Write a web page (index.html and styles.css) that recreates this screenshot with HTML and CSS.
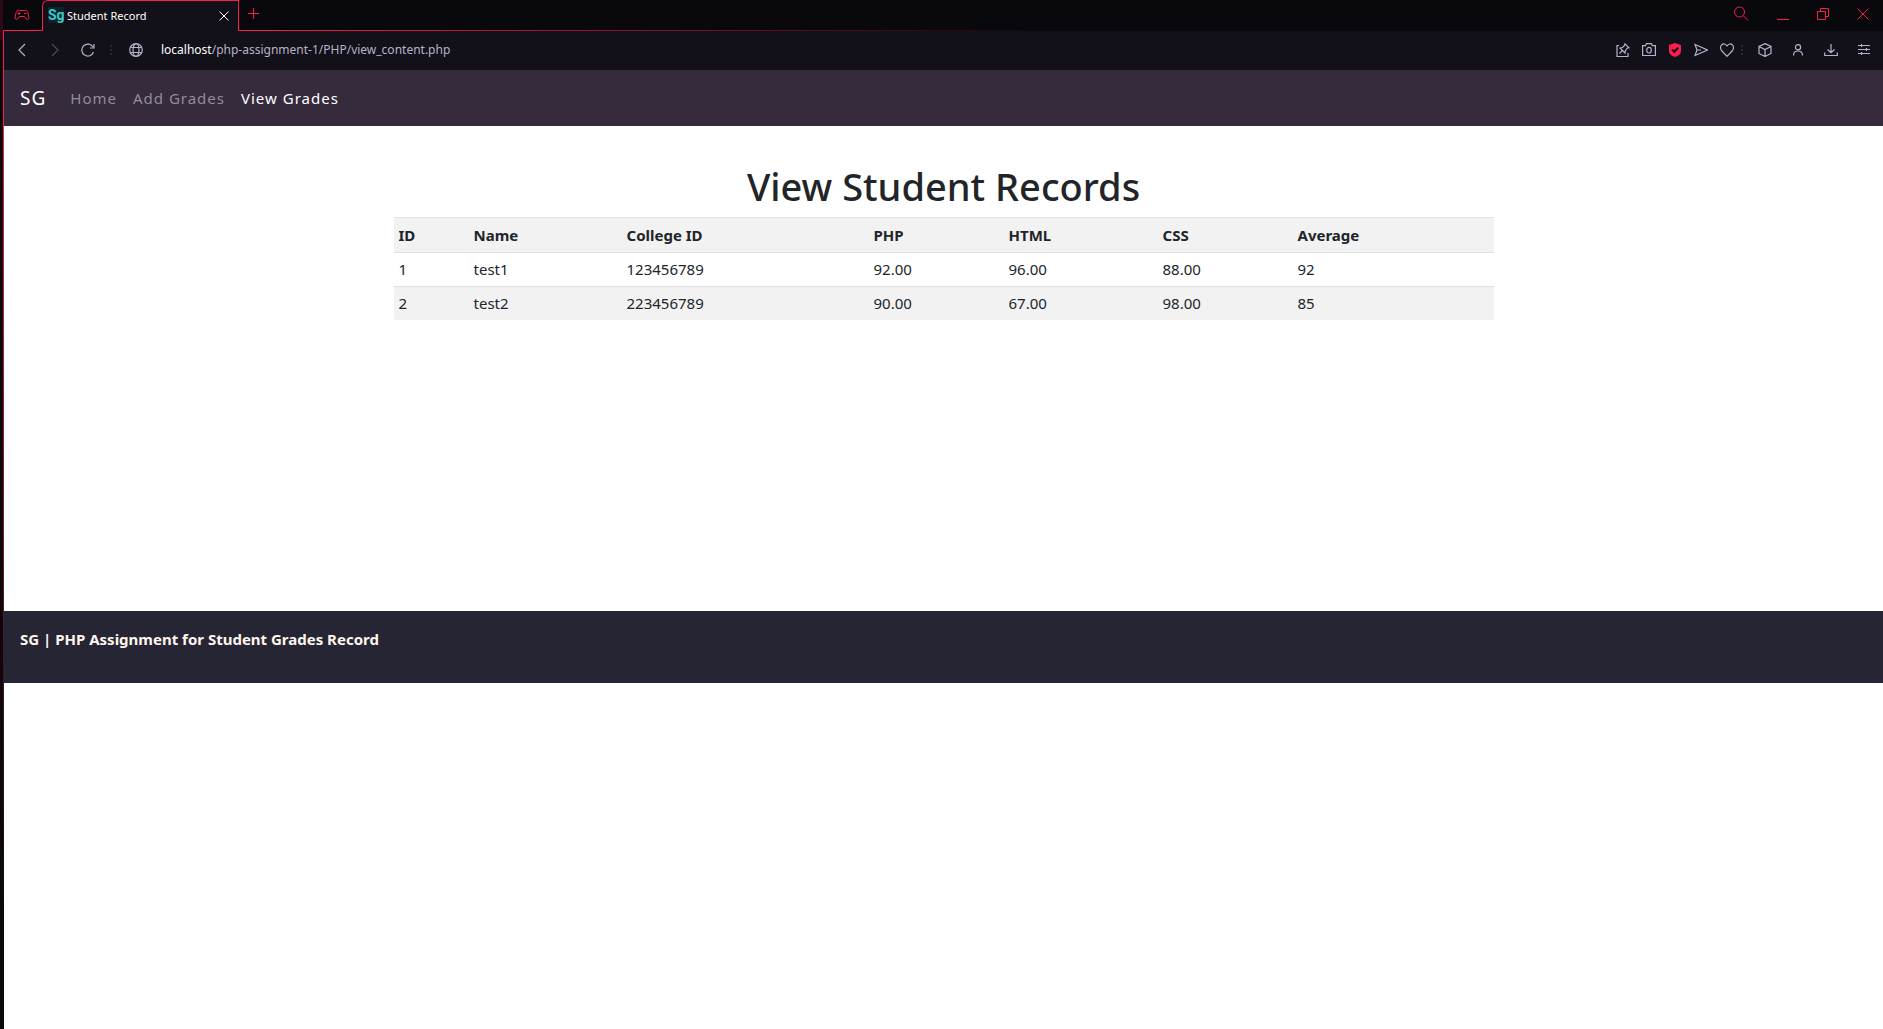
FILE: index.html
```html
<!DOCTYPE html>
<html lang="en">
<head>
<meta charset="utf-8">
<title>Student Record</title>
<link rel="stylesheet" href="styles.css">
</head>
<body>
<div class="edge"></div>
<div class="window">
  <header class="tabs">
    <button class="icon-btn gx" aria-label="Corner"><svg width="16" height="12" viewBox="0 0 16 12"><path d="M3.500 1.500Q4.500 .5 5.500 1.500H10.500Q11.500 .5 12.500 1.500Q14 3 14.500 6Q15.500 10.500 13.500 10.500Q12 10.500 10.500 7.500H5.500Q4 10.500 2.500 10.500Q.5 10.500 1.500 6Q2 3 3.500 1.500ZM3.500 4.500H6.500M5 3V6M10 4.500H12.500"/></svg></button>
    <div class="tab">
      <span class="favicon">Sg</span>
      <span class="tab-title">Student Record</span>
      <button class="icon-btn tab-close" aria-label="Close tab"><svg width="10" height="10" viewBox="0 0 10 10"><path d="M.5.5L9.500 9.500M9.500.5L.5 9.500"/></svg></button>
    </div>
    <div class="strip">
      <button class="icon-btn" aria-label="New tab"><svg width="12" height="12" viewBox="0 0 12 12"><path d="M5.500 0V11M0 5.500H11"/></svg></button>
      <div class="controls">
        <button class="icon-btn" aria-label="Search tabs"><svg width="16" height="16" viewBox="0 0 16 16"><circle cx="6.500" cy="6" r="5"/><path d="M10 9.500L15 14.500"/></svg></button>
        <button class="icon-btn" aria-label="Minimize"><svg width="12" height="12" viewBox="0 0 12 12"><path d="M0 11.500H12"/></svg></button>
        <button class="icon-btn" aria-label="Restore"><svg width="12" height="12" viewBox="0 0 12 12"><path d="M.5 3.500H8.500V11.500H.5ZM3.500 3.500V.5H11.500V8.500H8.500"/></svg></button>
        <button class="icon-btn" aria-label="Close window"><svg width="12" height="12" viewBox="0 0 12 12"><path d="M.5.5L11.500 11.500M11.500.5L.5 11.500"/></svg></button>
      </div>
    </div>
  </header>

  <div class="toolbar">
    <div class="nav-buttons">
      <button class="icon-btn" aria-label="Back"><svg width="14" height="14" viewBox="0 0 14 14"><path d="M10 1L4 7L10 13"/></svg></button>
      <button class="icon-btn faded" aria-label="Forward"><svg width="14" height="14" viewBox="0 0 14 14"><path d="M4 1L10 7L4 13"/></svg></button>
      <button class="icon-btn" aria-label="Reload"><svg width="14" height="14" viewBox="0 0 14 14"><path d="M12.500 9A6 6 0 1 1 12 4M13 1V5H9"/></svg></button>
    </div>
    <span class="dots"></span>
    <button class="icon-btn site" aria-label="Site information"><svg width="14" height="14" viewBox="0 0 14 14"><circle cx="7" cy="7" r="6.300"/><ellipse cx="7" cy="7" rx="3" ry="6.300"/><path d="M1.500 4.500H12.500M1.500 9.500H12.500"/></svg></button>
    <div class="url"><strong>localhost</strong>/php-assignment-1/PHP/view_content.php</div>
    <div class="actions">
      <button class="icon-btn" aria-label="Pinboard"><svg width="14" height="14" viewBox="0 0 14 14"><path d="M3 2.500H1V13.500H12V10M9 .8L13 4.800L11.500 5L9.500 7.500L9 10L4 5L6.500 4.500L8.500 2.500ZM6.200 7.600L3.500 10.500"/></svg></button>
      <button class="icon-btn" aria-label="Snapshot"><svg width="14" height="14" viewBox="0 0 14 14"><path d="M.6 2.700H3.500L4.500.7H9.500L10.500 2.700H13.400V12.500H.6Z"/><ellipse cx="7" cy="7.200" rx="2.300" ry="2.800"/></svg></button>
      <button class="icon-btn shield" aria-label="Blocker"><svg width="14" height="14" viewBox="0 0 14 14"><path class="fill" d="M7 0L13 2V8Q13 12 7 14Q1 12 1 8V2Z"/><path class="tick" d="M4 6.500L6.300 8.800L10.200 4.800"/></svg></button>
      <button class="icon-btn" aria-label="My Flow"><svg width="14" height="14" viewBox="0 0 14 14"><path d="M1 1.500L13.500 7L1 12.500L3 7ZM3 7H7"/></svg></button>
      <button class="icon-btn" aria-label="Bookmark"><svg width="14" height="14" viewBox="0 0 14 14"><path d="M7 13.300L1.500 7.500Q-.5 4.500 1.500 2Q4.500-.5 7 3Q9.500-.5 12.500 2Q14.500 4.500 12.500 7.500Z"/></svg></button>
    </div>
    <span class="dots"></span>
    <div class="menus">
      <button class="icon-btn" aria-label="Extensions"><svg width="14" height="14" viewBox="0 0 14 14"><path d="M7 .6L13 3.500V10.500L7 13.500L1 10.500V3.500ZM1 3.500L7 6.500L13 3.500M7 6.500V13.500"/></svg></button>
      <button class="icon-btn" aria-label="Profile"><svg width="14" height="14" viewBox="0 0 14 14"><circle cx="7" cy="4.200" r="2.600"/><path d="M2.500 12.500Q2.500 8 7 8Q11.500 8 11.500 12.500"/></svg></button>
      <button class="icon-btn" aria-label="Downloads"><svg width="14" height="14" viewBox="0 0 14 14"><path d="M7 1V9.500M3.500 6.500L7 9.800L10.500 6.500M.7 9.500V12.500H13.300V9.500"/></svg></button>
      <button class="icon-btn" aria-label="Easy setup"><svg width="14" height="14" viewBox="0 0 14 14"><path d="M1 2.500H13M1 6.500H13M1 10.500H13M4.500 1V4M9.500 5V8M4.500 9V12"/></svg></button>
    </div>
  </div>

  <nav class="navbar">
    <a class="brand" href="#">SG</a>
    <a class="nav-link" href="#">Home</a>
    <a class="nav-link" href="#">Add Grades</a>
    <a class="nav-link active" href="#">View Grades</a>
  </nav>

  <main class="content">
    <h1>View Student Records</h1>
    <table class="records">
      <colgroup><col class="c-id"><col class="c-name"><col class="c-college"><col class="c-php"><col class="c-html"><col class="c-css"><col></colgroup>
      <thead>
        <tr><th>ID</th><th>Name</th><th>College ID</th><th>PHP</th><th>HTML</th><th>CSS</th><th>Average</th></tr>
      </thead>
      <tbody>
        <tr><td>1</td><td>test1</td><td>123456789</td><td>92.00</td><td>96.00</td><td>88.00</td><td>92</td></tr>
        <tr><td>2</td><td>test2</td><td>223456789</td><td>90.00</td><td>67.00</td><td>98.00</td><td>85</td></tr>
      </tbody>
    </table>
  </main>

  <footer class="footer"><p>SG | PHP Assignment for Student Grades Record</p></footer>
</div>
</body>
</html>
```
FILE: styles.css
```css
* { box-sizing: border-box; }

body {
  margin: 0;
  min-height: 100vh;
  display: flex;
  background: #fff;
  color: #212529;
  font: 15px/24px "Noto Sans", "Open Sans", sans-serif;
}

/* Window frame on the left */
.edge {
  flex: none;
  width: 4px;
  background: linear-gradient(#2b0a17 40px, #08080d 40px) 0 0 / 3px 100% no-repeat,
    linear-gradient(#08080d 30px, #fa1e4e 30px, #fa1e4e 10%, #08080d 90%);
}

.window {
  flex: 1;
  min-width: 0;
}

.icon-btn {
  display: grid;
  place-items: center;
  padding: 0;
  border: 0;
  background: none;
  color: inherit;
}

svg {
  display: block;
  fill: none;
  stroke: currentColor;
  stroke-width: 1.2;
}

/* Tab strip */
.tabs {
  display: flex;
  height: 31px;
  background: #08080d;
  color: #fa1e4e;
}

.tabs svg { stroke-width: 1; }

.gx {
  width: 38px;
  padding-right: 2px;
  border-bottom: 1px solid #fa1e4e;
}

.tab {
  display: flex;
  align-items: center;
  width: 197px;
  padding: 0 9px 0 5px;
  border: 1px solid #fa1e4e;
  border-bottom: 0;
  border-top-left-radius: 6px;
  background: #121019;
  color: #fff;
}

.favicon {
  width: 16px;
  margin: 0 3px 2px 0;
  background: #0b2429;
  color: #3cc8c8;
  font: 700 14px/16px Roboto, sans-serif;
}

.tab-title {
  flex: 1;
  font-size: 11px;
}

.strip {
  flex: 1;
  display: flex;
  justify-content: space-between;
  padding: 0 14px 3px 9px;
  border-bottom: 1px solid;
  border-image: linear-gradient(90deg, #fa1e4e, #08080d 50%) 1;
}

.controls {
  display: flex;
  gap: 28px;
}

/* Address bar */
.toolbar {
  display: flex;
  align-items: center;
  height: 39px;
  padding: 0 12px 2px 11px;
  background: #121019;
  color: #b9b1cc;
}

.nav-buttons {
  display: flex;
  gap: 19px;
}

.faded { opacity: .35; }

.dots {
  width: 2px;
  height: 10px;
  margin: 0 7px;
  background: repeating-linear-gradient(#2b2836 0 2px, transparent 2px 4px);
}

.nav-buttons + .dots { margin: 0 17px 0 15px; }

.site { margin-right: 18px; }

.url {
  flex: 1;
  font-size: 12px;
}

.url strong {
  color: #fff;
  font-weight: 400;
}

.actions {
  display: flex;
  gap: 12px;
}

.shield .fill {
  fill: #fa1e4e;
  stroke: none;
}

.shield .tick {
  stroke: #121019;
  stroke-width: 2;
}

.menus {
  display: flex;
  gap: 19px;
  margin-left: 8px;
}

/* Site navigation */
.navbar {
  display: flex;
  align-items: center;
  gap: 16px;
  height: 56px;
  padding: 0 16px;
  background: #352b3d;
  letter-spacing: 1px;
}

.navbar a { text-decoration: none; }

.brand {
  margin-right: 8px;
  color: #fff;
  font-size: 19px;
}

.nav-link { color: #928c96; }

.nav-link.active { color: #fff; }

/* Records */
.content {
  width: 100%;
  max-width: 1100px;
  min-height: 485px;
  margin: 0 auto;
  padding-top: 36px;
}

h1 {
  margin: 0 0 7px;
  font-size: 38px;
  font-weight: 500;
  line-height: 48px;
  text-align: center;
}

.records {
  width: 100%;
  border-collapse: collapse;
  table-layout: fixed;
}

.c-id { width: 75px; }
.c-name { width: 153px; }
.c-college { width: 247px; }
.c-php, .c-css { width: 135px; }
.c-html { width: 154px; }

.records th,
.records td {
  padding: 5px;
  border-top: 1px solid #dee2e6;
  text-align: left;
}

.records td { padding-top: 4px; }

.records thead tr,
.records tbody tr:nth-child(even) { background: #f2f2f2; }

/* Footer */
.footer {
  min-height: 72px;
  padding: 16px;
  background: #262534;
  color: #fff5ee;
  font-weight: 700;
}

.footer p { margin: 0; }
```
